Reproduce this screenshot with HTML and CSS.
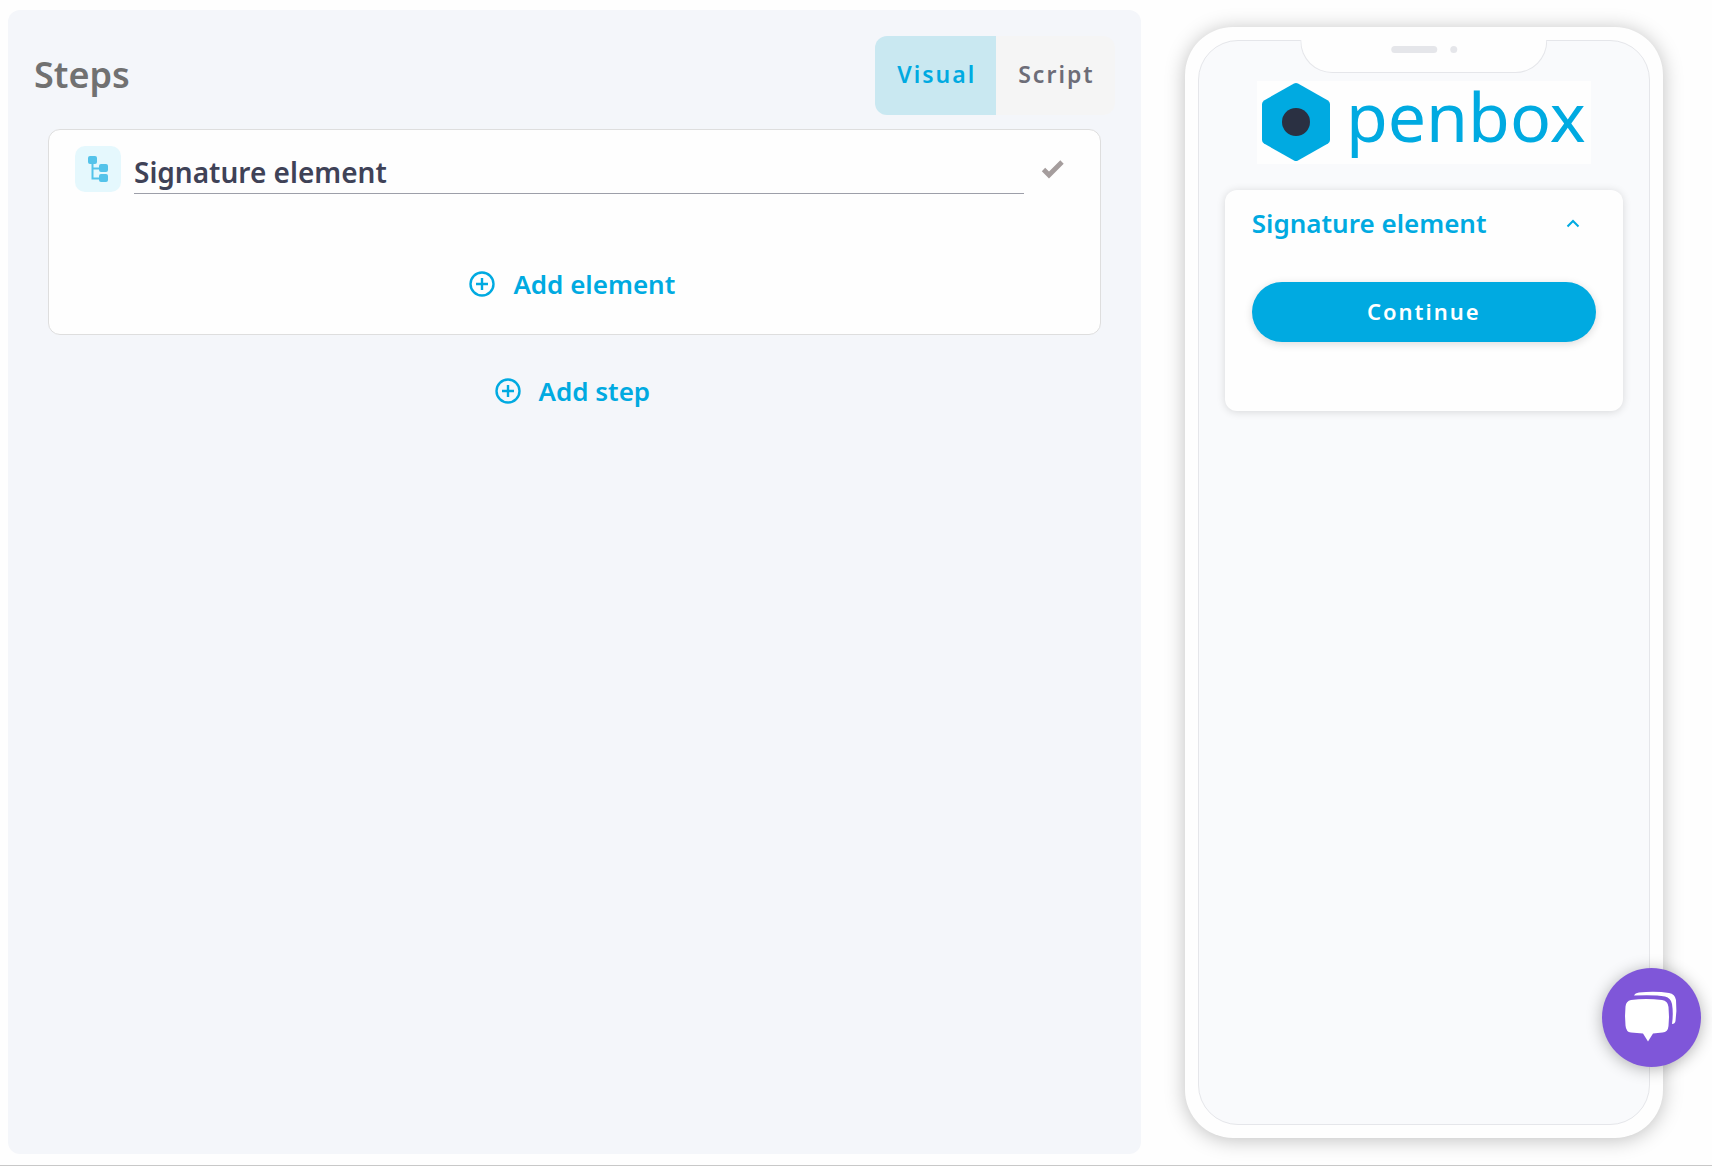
FILE: index.html
```html
<!DOCTYPE html>
<html lang="en">
  <head>
    <meta charset="UTF-8" />
    <meta name="viewport" content="width=device-width, initial-scale=1" />
    <title>Steps - Penbox</title>
    <link rel="stylesheet" href="styles.css">
  </head>
  <body>
    <main class="editor">
      <section class="steps">
        <header class="steps-header">
          <h1>Steps</h1>
          <div class="mode-switch">
            <button type="button" class="mode active">Visual</button>
            <button type="button" class="mode">Script</button>
          </div>
        </header>

        <!-- Step card -->
        <div class="step-card">
          <div class="step-title">
            <span class="step-icon">
              <svg width="22" height="28" viewBox="0 0 22 28" aria-hidden="true">
                <path d="M5.5 8v15.500h7M5.500 13.500h7" fill="none" stroke="currentColor" stroke-width="2" />
                <rect x="1" y="1" width="9" height="8" rx="2" />
                <rect x="12" y="9" width="9" height="8" rx="2" />
                <rect x="12" y="19" width="9" height="8" rx="2" />
              </svg>
            </span>
            <input type="text" class="step-name" value="Signature element" aria-label="Step name">
            <button type="button" class="confirm" aria-label="Save step name">
              <svg width="24" height="20" viewBox="0 0 24 20" aria-hidden="true">
                <path d="M2.500 10.500L8 16L21 3" fill="none" stroke="currentColor" stroke-width="4.800" />
              </svg>
            </button>
          </div>
          <button type="button" class="add-btn">
            <svg width="26" height="26" viewBox="0 0 26 26" aria-hidden="true">
              <circle cx="13" cy="13" r="11.500" />
              <path d="M13 7v12M7 13h12" />
            </svg>
            Add element
          </button>
        </div>

        <button type="button" class="add-btn">
          <svg width="26" height="26" viewBox="0 0 26 26" aria-hidden="true">
            <circle cx="13" cy="13" r="11.500" />
            <path d="M13 7v12M7 13h12" />
          </svg>
          Add step
        </button>
      </section>

      <!-- Phone preview -->
      <aside class="preview">
        <div class="phone">
          <div class="screen">
            <div class="notch">
              <span class="speaker"></span>
              <span class="camera"></span>
            </div>
            <div class="brand">
              <svg width="68" height="80" viewBox="0 0 68 80" aria-hidden="true">
                <path d="M32 1.500q2-1 4 0L66 18.500q2 1.500 2 3.500v36q0 2-2 3.500L36 78.500q-2 1-4 0L2 61.500Q0 60 0 58V22q0-2 2-3.500z" fill="#00aae1" />
                <circle cx="34" cy="40" r="14" fill="#2a3042" />
              </svg>
              <span class="brand-name">penbox</span>
            </div>
            <div class="form-card">
              <button type="button" class="form-title">
                Signature element
                <svg width="14" height="10" viewBox="0 0 14 10" aria-hidden="true">
                  <path d="M1.500 8.500L7 3l5.500 5.500" fill="none" stroke="currentColor" stroke-width="2" />
                </svg>
              </button>
              <button type="button" class="continue">Continue</button>
            </div>
          </div>
        </div>
      </aside>
    </main>

    <button type="button" class="chat" aria-label="Open chat">
      <svg width="54" height="52" viewBox="0 0 54 52" aria-hidden="true">
        <path d="M7 9Q22 7 38 9q6 1 6.500 7 1 10 0 19-.5 6-6 6.500l-9.500 1-5 8-5-8-12-1q-5-.5-5.500-7-1-9 0-19Q2 10 7 9z" />
        <path d="M10 4.500Q11 2 15 1.500 32 0 45 2q6 1 7 7 1 11-.5 21-.5 3-3.500 3Q49.500 22 48 13q-1-6-7-7.500Q31 3.500 10 4.500z" />
      </svg>
    </button>
  </body>
</html>
```
FILE: styles.css
```css
* {
  box-sizing: border-box;
}

body {
  margin: 0;
  background-color: #fefefe;
  color: #3f4257;
  font-family: "Noto Sans", "Open Sans", sans-serif;
}

button {
  border: none;
  background: none;
  padding: 0;
  font: inherit;
  color: inherit;
  cursor: pointer;
}

svg {
  display: block;
  flex-shrink: 0;
}

.editor {
  display: grid;
  grid-template-columns: 2fr 1fr;
  min-height: 100vh;
  padding: 10px 5px 11px 8px;
  border-bottom: 1px solid #c8c8c8;
}

/* Steps panel */
.steps {
  display: flex;
  flex-direction: column;
  padding: 26px;
  background-color: #f4f6fa;
  border-radius: 12px;
}

.steps-header {
  display: flex;
  justify-content: space-between;
  align-items: center;
  margin-bottom: 14px;
}

.steps-header h1 {
  margin: 0;
  padding-bottom: 2px;
  font-size: 36px;
  line-height: 44px;
  font-weight: 600;
  color: #717171;
}

.mode-switch {
  display: flex;
  border-radius: 12px;
  overflow: hidden;
}

.mode {
  height: 79px;
  padding: 0 20px 4px 22px;
  background-color: #f5f5f5;
  font-size: 23px;
  font-weight: 600;
  letter-spacing: 2px;
  color: #6d6d78;
}

.mode.active {
  background-color: #c9e8f1;
  color: #00aae1;
}

.step-card {
  margin: 0 14px 38px;
  padding: 16px 26px 32px;
  background-color: #fefefe;
  border: 1px solid #dedede;
  border-radius: 12px;
}

.step-title {
  display: flex;
  align-items: flex-start;
  margin-bottom: 72px;
}

.step-icon {
  display: flex;
  align-items: center;
  justify-content: center;
  width: 46px;
  height: 46px;
  margin-right: 13px;
  background-color: #e5f8fd;
  border-radius: 10px;
  color: #54c3ea;
  fill: currentColor;
}

.step-name {
  flex: 1;
  min-width: 0;
  height: 48px;
  padding: 4px 0 0;
  border: none;
  border-bottom: 1px solid #9d9fa9;
  border-radius: 0;
  background: none;
  outline: none;
  font: inherit;
  font-size: 28px;
  font-weight: 600;
  color: #3f4257;
}

.confirm {
  margin: 13px 9px 0 17px;
  color: #a59d9d;
}

.add-btn {
  display: flex;
  align-items: center;
  gap: 18px;
  height: 36px;
  margin: 0 auto;
  padding-right: 4px;
  font-size: 26px;
  font-weight: 600;
  color: #00aae1;
}

.add-btn svg {
  fill: none;
  stroke: currentColor;
  stroke-width: 2.4;
}

/* Phone */
.preview {
  display: flex;
  justify-content: center;
  padding: 17px 0 16px;
}

.phone {
  display: flex;
  width: 100%;
  max-width: 478px;
  padding: 13px;
  background-color: #fefefe;
  border-radius: 48px;
  box-shadow: 0 2px 20px rgba(0, 0, 0, 0.25);
}

.screen {
  position: relative;
  flex: 1;
  padding: 40px 26px;
  background-color: #f9fafc;
  border: 1px solid #e5e6ea;
  border-radius: 40px;
}

.notch {
  position: absolute;
  top: -1px;
  left: 50%;
  display: flex;
  justify-content: center;
  gap: 13px;
  width: 55%;
  height: 33px;
  padding-top: 6px;
  background-color: #fefefe;
  border: 1px solid #e5e6ea;
  border-top: none;
  border-radius: 0 0 32px 32px;
  transform: translateX(-50%);
}

.speaker {
  width: 46px;
  height: 7px;
  border-radius: 4px;
  background-color: #e5e6ea;
}

.camera {
  width: 7px;
  height: 7px;
  border-radius: 50%;
  background-color: #e5e6ea;
}

.brand {
  display: flex;
  align-items: flex-start;
  gap: 16px;
  width: fit-content;
  height: 83px;
  margin: 0 auto 26px;
  padding: 1px 5px;
  background-color: #fefefe;
}

.brand-name {
  font-size: 68px;
  line-height: 68px;
  font-weight: 400;
  color: #00aae1;
}

.form-card {
  min-height: 221px;
  padding: 12px 27px;
  background-color: #fefefe;
  border-radius: 12px;
  box-shadow: 0 1px 8px rgba(0, 0, 0, 0.14);
}

.form-title {
  display: flex;
  justify-content: space-between;
  align-items: center;
  width: 100%;
  height: 42px;
  margin-bottom: 38px;
  padding-right: 16px;
  font-size: 26px;
  font-weight: 600;
  color: #00aae1;
}

.continue {
  width: 100%;
  height: 60px;
  padding-bottom: 2px;
  border-radius: 30px;
  background-color: #00aae1;
  box-shadow: 0 2px 8px rgba(0, 0, 0, 0.14);
  font-size: 22px;
  font-weight: 600;
  letter-spacing: 2px;
  color: #fff;
}

/* Chat bubble stays over the page */
.chat {
  position: fixed;
  right: 11px;
  bottom: 99px;
  display: flex;
  align-items: center;
  justify-content: center;
  width: 99px;
  height: 99px;
  padding: 0 2px 2px 0;
  border-radius: 50%;
  background-color: #7f56d9;
  box-shadow: 0 2px 16px rgba(0, 0, 0, 0.3);
  fill: #fff;
}
```
